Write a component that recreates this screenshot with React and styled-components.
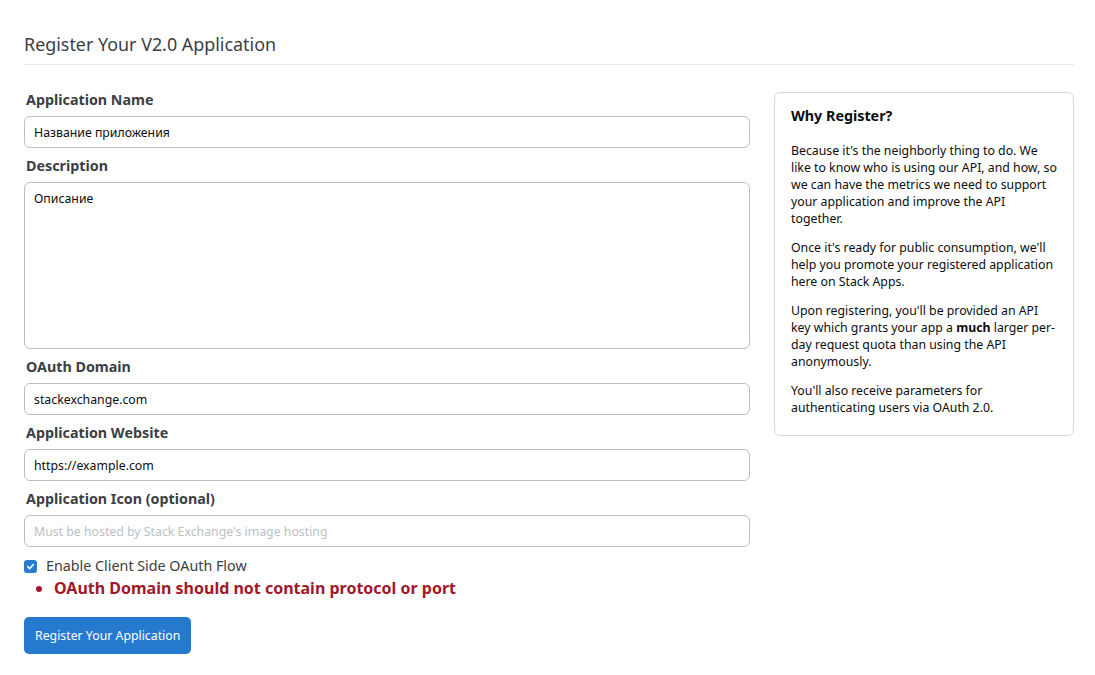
import React, { useState } from 'react';
import styled, { createGlobalStyle } from 'styled-components';

const GlobalStyle = createGlobalStyle`
  body {
    margin: 0;
    background: #fff;
    font-family: "Noto Sans", "Open Sans", sans-serif;
    color: #0c0d0e;
  }
`;

const Page = styled.div`
  padding: 24px 24px 0 24px;
  width: 1050px;
`;

const Title = styled.h1`
  margin: 8px 0 0 0;
  font-size: 17.9px;
  font-weight: 400;
  line-height: 24px;
  color: #3b4045;
  padding-bottom: 8px;
  border-bottom: 1px solid #e3e6e8;
`;

const Row = styled.div`
  display: flex;
  gap: 24px;
  align-items: flex-start;
`;

const FormCol = styled.form`
  width: 726px;
  padding-top: 25px;
  display: flex;
  flex-direction: column;
  gap: 8px;
`;

const Group = styled.div`
  display: flex;
  flex-direction: column;
  gap: 6px;
`;

const Label = styled.label`
  font-size: 14.3px;
  font-weight: 700;
  line-height: 20px;
  color: #3b4045;
  padding-left: 2px;
`;

const Input = styled.input`
  box-sizing: border-box;
  height: 32px;
  width: 100%;
  border: 1px solid #babfc4;
  border-radius: 6px;
  padding: 0 9px;
  font-family: inherit;
  font-size: 12.3px;
  color: #0c0d0e;
  outline: none;
  &::placeholder {
    color: #babfc4;
  }
`;

const TextArea = styled.textarea`
  box-sizing: border-box;
  height: 167px;
  width: 100%;
  border: 1px solid #babfc4;
  border-radius: 6px;
  padding: 7px 9px;
  font-family: inherit;
  font-size: 12.3px;
  line-height: 17px;
  color: #0c0d0e;
  resize: none;
  outline: none;
`;

const Footer = styled.div`
  display: flex;
  flex-direction: column;
  gap: 1px;
  margin-top: 1px;
`;

const CheckRow = styled.label`
  display: flex;
  align-items: center;
  gap: 9px;
  font-size: 14.3px;
  line-height: 20px;
  color: #3b4045;
`;

const CheckBox = styled.span`
  width: 13px;
  height: 13px;
  border-radius: 3px;
  background: #2b7bcd;
  display: flex;
  align-items: center;
  justify-content: center;
`;

const Errors = styled.ul`
  margin: 0;
  padding: 0 0 0 30px;
  color: #a2182a;
  font-size: 16px;
  font-weight: 700;
  line-height: 22px;
`;

const Button = styled.button`
  align-self: flex-start;
  margin-top: 10px;
  height: 37px;
  padding: 0 11px;
  border: none;
  border-radius: 5px;
  background: #2579ce;
  color: #fff;
  font-family: inherit;
  font-size: 12.3px;
  cursor: pointer;
`;

const Card = styled.aside`
  box-sizing: border-box;
  width: 300px;
  margin-top: 27px;
  border: 1px solid #d6d9dc;
  border-radius: 6px;
  padding: 13px 16px 19px 16px;
`;

const CardTitle = styled.h3`
  margin: 0 0 16px 0;
  font-size: 14.3px;
  font-weight: 700;
  line-height: 20px;
`;

const Para = styled.p`
  margin: 0 0 12px 0;
  font-size: 12.3px;
  line-height: 17px;
  &:last-child {
    margin-bottom: 0;
  }
`;

const App = () => {
  const [name, setName] = useState('Название приложения');
  const [desc, setDesc] = useState('Описание');
  const [domain, setDomain] = useState('stackexchange.com');
  const [site, setSite] = useState('https://example.com');

  return (
    <>
      <GlobalStyle />
      <Page>
        <Title>Register Your V2.0 Application</Title>
        <Row>
          <FormCol onSubmit={(e) => e.preventDefault()}>
            <Group>
              <Label>Application Name</Label>
              <Input value={name} onChange={(e) => setName(e.target.value)} />
            </Group>
            <Group>
              <Label>Description</Label>
              <TextArea value={desc} onChange={(e) => setDesc(e.target.value)} />
            </Group>
            <Group>
              <Label>OAuth Domain</Label>
              <Input value={domain} onChange={(e) => setDomain(e.target.value)} />
            </Group>
            <Group>
              <Label>Application Website</Label>
              <Input value={site} onChange={(e) => setSite(e.target.value)} />
            </Group>
            <Group>
              <Label>Application Icon (optional)</Label>
              <Input placeholder="Must be hosted by Stack Exchange's image hosting" />
            </Group>
            <Footer>
              <CheckRow>
                <CheckBox>
                  <svg width="9" height="9" viewBox="0 0 10 10">
                    <path d="M2 5.2 L4.2 7.3 L8.2 2.8" fill="none" stroke="#fff" strokeWidth="1.8" strokeLinecap="round" strokeLinejoin="round" />
                  </svg>
                </CheckBox>
                Enable Client Side OAuth Flow
              </CheckRow>
              <Errors>
                <li>OAuth Domain should not contain protocol or port</li>
              </Errors>
            </Footer>
            <Button type="submit">Register Your Application</Button>
          </FormCol>
          <Card>
            <CardTitle>Why Register?</CardTitle>
            <Para>
              Because it's the neighborly thing to do. We like to know who is using our API, and how, so we can have the metrics we need to support your application and improve the API together.
            </Para>
            <Para>
              Once it's ready for public consumption, we'll help you promote your registered application here on Stack Apps.
            </Para>
            <Para>
              Upon registering, you'll be provided an API key which grants your app a <b>much</b> larger per-day request quota than using the API anonymously.
            </Para>
            <Para>
              You'll also receive parameters for authenticating users via OAuth 2.0.
            </Para>
          </Card>
        </Row>
      </Page>
    </>
  );
};

export default App;
